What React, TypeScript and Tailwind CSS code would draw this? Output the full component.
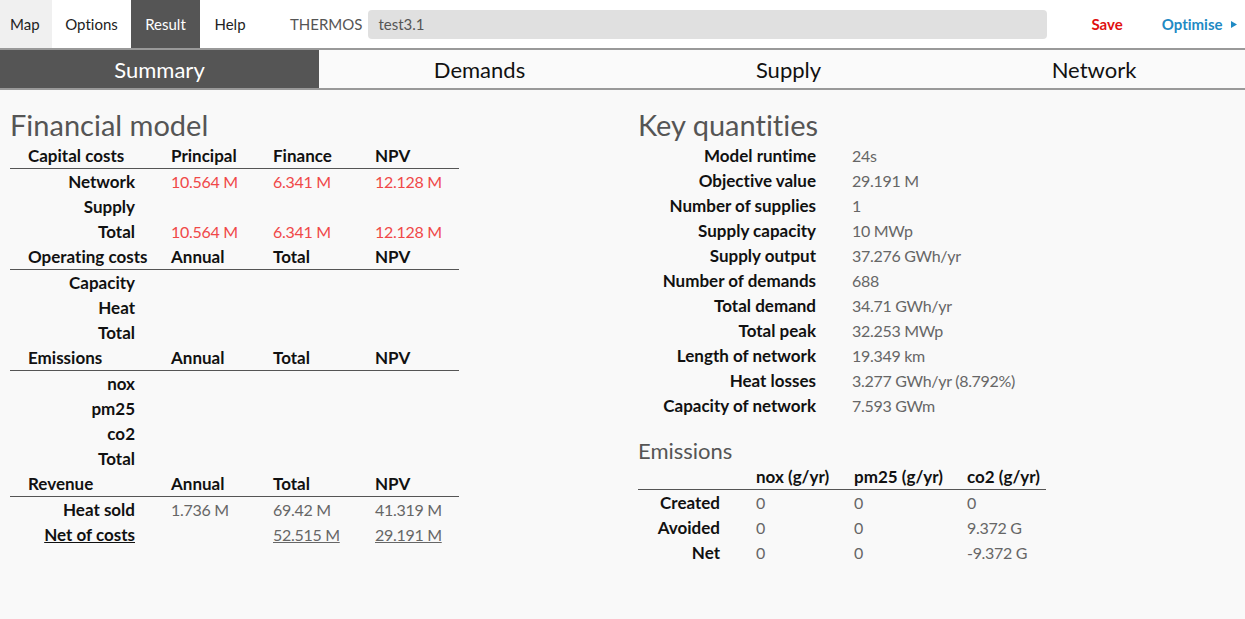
import React from "react";

const red = "text-[#f04848] text-[16px] tracking-[-0.3px]";
const val = "text-[#666] text-[16px] tracking-[-0.3px]";

function FinHeader({ cols }: { cols: string[] }) {
  return (
    <div className="grid grid-cols-[143px_102px_102px_102px] border-b-[1.5px] border-[#555] h-[26px] items-center font-bold text-[#111]">
      {cols.map((c, i) => (
        <div key={i} className="pl-[18px] whitespace-nowrap">{c}</div>
      ))}
    </div>
  );
}

function FinRow({ label, vals, cls, underline }: { label: string; vals: string[]; cls?: string; underline?: boolean }) {
  return (
    <div className="grid grid-cols-[143px_102px_102px_102px] h-[25px] items-center">
      <div className={`text-right pr-[18px] font-bold text-[#111] whitespace-nowrap ${underline ? "underline" : ""}`}>{label}</div>
      {[0, 1, 2].map((i) => (
        <div key={i} className={`pl-[18px] whitespace-nowrap ${cls ?? val} ${underline ? "underline" : ""}`}>{vals[i] ?? ""}</div>
      ))}
    </div>
  );
}

const keyQ: [string, string][] = [
  ["Model runtime", "24s"],
  ["Objective value", "29.191 M"],
  ["Number of supplies", "1"],
  ["Supply capacity", "10 MWp"],
  ["Supply output", "37.276 GWh/yr"],
  ["Number of demands", "688"],
  ["Total demand", "34.71 GWh/yr"],
  ["Total peak", "32.253 MWp"],
  ["Length of network", "19.349 km"],
  ["Heat losses", "3.277 GWh/yr (8.792%)"],
  ["Capacity of network", "7.593 GWm"],
];

export default function App() {
  return (
    <div className="w-[1245px] h-[619px] bg-[#f9f9f9] overflow-hidden text-[17px] [font-variant-ligatures:none]" style={{ fontFamily: "Lato, 'Open Sans', sans-serif" }}>
      {/* top nav */}
      <div className="h-[50px] bg-white border-b-[2px] border-[#999] flex items-stretch text-[15px]">
        <div className="w-[52px] bg-[#f0f0f0] flex items-center pl-[10px] text-[#222]">Map</div>
        <div className="w-[79px] flex items-center justify-center text-[#222]">Options</div>
        <div className="w-[69px] bg-[#555] flex items-center justify-center text-white">Result</div>
        <div className="w-[60px] flex items-center justify-center text-[#222]">Help</div>
        <div className="ml-[30px] flex items-center text-[#555] text-[15px]">THERMOS</div>
        <div className="ml-[6px] my-[10px] w-[679px] h-[29px] bg-[#e0e0e0] rounded-[4px] flex items-center pl-[10px] text-[#555] text-[15px]">test3.1</div>
        <div className="ml-[44px] flex items-center font-bold text-[#e01010] text-[15px]">Save</div>
        <div className="ml-[39px] flex items-center font-bold text-[#1f8ac4] text-[15px]">
          Optimise
          <svg width="6" height="7" viewBox="0 0 6 7" className="ml-[8px]"><path d="M0 0 L6 3.5 L0 7 Z" fill="#1f8ac4" /></svg>
        </div>
      </div>
      {/* tabs */}
      <div className="h-[40px] bg-[#fafafa] border-b-[2px] border-[#999] flex text-[22px] text-[#111]">
        <div className="w-[319px] bg-[#555] text-white flex items-center justify-center">Summary</div>
        <div className="w-[321px] flex items-center justify-center">Demands</div>
        <div className="w-[297px] flex items-center justify-center">Supply</div>
        <div className="flex-1 flex items-center justify-center pl-[6px]">Network</div>
      </div>
      {/* content */}
      <div className="flex">
        <div className="w-[628px] pl-[10px]">
          <div className="text-[29px] text-[#555] leading-none mt-[20px] mb-[4px]">Financial model</div>
          <div className="w-[449px]">
            <FinHeader cols={["Capital costs", "Principal", "Finance", "NPV"]} />
            <FinRow label="Network" vals={["10.564 M", "6.341 M", "12.128 M"]} cls={red} />
            <FinRow label="Supply" vals={[]} />
            <FinRow label="Total" vals={["10.564 M", "6.341 M", "12.128 M"]} cls={red} />
            <FinHeader cols={["Operating costs", "Annual", "Total", "NPV"]} />
            <FinRow label="Capacity" vals={[]} />
            <FinRow label="Heat" vals={[]} />
            <FinRow label="Total" vals={[]} />
            <FinHeader cols={["Emissions", "Annual", "Total", "NPV"]} />
            <FinRow label="nox" vals={[]} />
            <FinRow label="pm25" vals={[]} />
            <FinRow label="co2" vals={[]} />
            <FinRow label="Total" vals={[]} />
            <FinHeader cols={["Revenue", "Annual", "Total", "NPV"]} />
            <FinRow label="Heat sold" vals={["1.736 M", "69.42 M", "41.319 M"]} />
            <FinRow label="Net of costs" vals={["", "52.515 M", "29.191 M"]} underline />
          </div>
        </div>
        <div className="flex-1 pl-[10px]">
          <div className="text-[29px] text-[#555] leading-none mt-[20px] mb-[4px]">Key quantities</div>
          <div className="grid grid-cols-[196px_auto] w-max">
            {keyQ.map(([k, v]) => (
              <React.Fragment key={k}>
                <div className="h-[25px] flex items-center justify-end pr-[18px] font-bold text-[#111] whitespace-nowrap">{k}</div>
                <div className={`h-[25px] flex items-center pl-[18px] whitespace-nowrap ${val}`}>{v}</div>
              </React.Fragment>
            ))}
          </div>
          <div className="text-[22px] text-[#555] leading-none mt-[22px] mb-[2px]">Emissions</div>
          <div className="w-[408px]">
            <div className="grid grid-cols-[100px_98px_113px_97px] h-[26px] items-center border-b-[1.5px] border-[#555] font-bold text-[#111]">
              <div></div>
              <div className="pl-[18px] whitespace-nowrap">nox (g/yr)</div>
              <div className="pl-[18px] whitespace-nowrap">pm25 (g/yr)</div>
              <div className="pl-[18px] whitespace-nowrap">co2 (g/yr)</div>
            </div>
            {[
              ["Created", "0", "0", "0"],
              ["Avoided", "0", "0", "9.372 G"],
              ["Net", "0", "0", "-9.372 G"],
            ].map((r) => (
              <div key={r[0]} className="grid grid-cols-[100px_98px_113px_97px] h-[25px] items-center">
                <div className="text-right pr-[18px] font-bold text-[#111]">{r[0]}</div>
                <div className={`pl-[18px] ${val}`}>{r[1]}</div>
                <div className={`pl-[18px] ${val}`}>{r[2]}</div>
                <div className={`pl-[18px] whitespace-nowrap ${val}`}>{r[3]}</div>
              </div>
            ))}
          </div>
        </div>
      </div>
    </div>
  );
}
